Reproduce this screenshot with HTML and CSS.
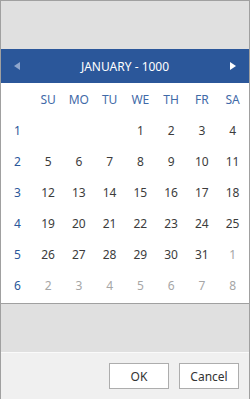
FILE: index.html
```html
<!DOCTYPE html>
<html lang="en">
<head>
    <meta charset="UTF-8">
    <meta name="viewport" content="width=device-width, initial-scale=1.0">
    <title>Date Picker</title>
    <link rel="stylesheet" href="styles.css">
</head>
<body>

    <div class="window">
        <div class="top-bar"></div>

        <div class="month-bar">
            <span class="nav prev"></span>
            <span class="month-title">JANUARY - 1000</span>
            <span class="nav next"></span>
        </div>

        <div class="calendar">
            <div class="cell"></div>
            <div class="cell day-name">SU</div>
            <div class="cell day-name">MO</div>
            <div class="cell day-name">TU</div>
            <div class="cell day-name">WE</div>
            <div class="cell day-name">TH</div>
            <div class="cell day-name">FR</div>
            <div class="cell day-name">SA</div>

            <div class="cell week">1</div>
            <div class="cell"></div>
            <div class="cell"></div>
            <div class="cell"></div>
            <div class="cell day">1</div>
            <div class="cell day">2</div>
            <div class="cell day">3</div>
            <div class="cell day">4</div>

            <div class="cell week">2</div>
            <div class="cell day">5</div>
            <div class="cell day">6</div>
            <div class="cell day">7</div>
            <div class="cell day">8</div>
            <div class="cell day">9</div>
            <div class="cell day">10</div>
            <div class="cell day">11</div>

            <div class="cell week">3</div>
            <div class="cell day">12</div>
            <div class="cell day">13</div>
            <div class="cell day">14</div>
            <div class="cell day">15</div>
            <div class="cell day">16</div>
            <div class="cell day">17</div>
            <div class="cell day">18</div>

            <div class="cell week">4</div>
            <div class="cell day">19</div>
            <div class="cell day">20</div>
            <div class="cell day">21</div>
            <div class="cell day">22</div>
            <div class="cell day">23</div>
            <div class="cell day">24</div>
            <div class="cell day">25</div>

            <div class="cell week">5</div>
            <div class="cell day">26</div>
            <div class="cell day">27</div>
            <div class="cell day">28</div>
            <div class="cell day">29</div>
            <div class="cell day">30</div>
            <div class="cell day">31</div>
            <div class="cell day other">1</div>

            <div class="cell week">6</div>
            <div class="cell day other">2</div>
            <div class="cell day other">3</div>
            <div class="cell day other">4</div>
            <div class="cell day other">5</div>
            <div class="cell day other">6</div>
            <div class="cell day other">7</div>
            <div class="cell day other">8</div>
        </div>

        <div class="spacer"></div>

        <div class="footer">
            <button type="button" class="btn">OK</button>
            <button type="button" class="btn">Cancel</button>
        </div>
    </div>

</body>
</html>
```

FILE: styles.css
```css
body {
    margin: 0;
    font-family: "Noto Sans", "Open Sans", sans-serif;
    background-color: #f0f0f0;
}

.window {
    width: 250px;
    height: 399px;
    box-sizing: border-box;
    border: 1px solid #a0a0a0;
    border-bottom: none;
    display: flex;
    flex-direction: column;
}

.top-bar {
    height: 48px;
    background-color: #e0e0e0;
}

.month-bar {
    height: 34px;
    background-color: #2b579a;
    color: #fff;
    display: flex;
    align-items: center;
    justify-content: space-between;
    padding: 0 13px;
}

.month-title {
    font-size: 12px;
}

.nav {
    width: 0;
    height: 0;
    border-top: 4px solid transparent;
    border-bottom: 4px solid transparent;
}

.nav.prev {
    border-right: 6px solid #8fa6cc;
}

.nav.next {
    border-left: 6px solid #fff;
}

.calendar {
    background-color: #fff;
    display: grid;
    grid-template-columns: repeat(8, 1fr);
    grid-auto-rows: 31px;
    padding: 1px 1px 2px;
    border-bottom: 1px solid #a0a0a0;
}

.cell {
    display: flex;
    align-items: center;
    justify-content: center;
    font-size: 12px;
}

.day-name {
    color: #3f6aa8;
}

.week {
    color: #2b579a;
}

.day {
    color: #3c3c3c;
}

.day.other {
    color: #a6a6a6;
}

.spacer {
    height: 48px;
    background-color: #e0e0e0;
    border-bottom: 1px solid #fafafa;
}

.footer {
    flex: 1;
    display: flex;
    justify-content: flex-end;
    align-items: flex-start;
    gap: 10px;
    padding: 10px 10px 0 0;
    background-color: #f0f0f0;
}

.btn {
    width: 60px;
    height: 26px;
    background-color: #fff;
    border: 1px solid #adadad;
    font-family: "Noto Sans", "Open Sans", sans-serif;
    font-size: 12px;
    color: #333;
    padding: 0;
}
```
